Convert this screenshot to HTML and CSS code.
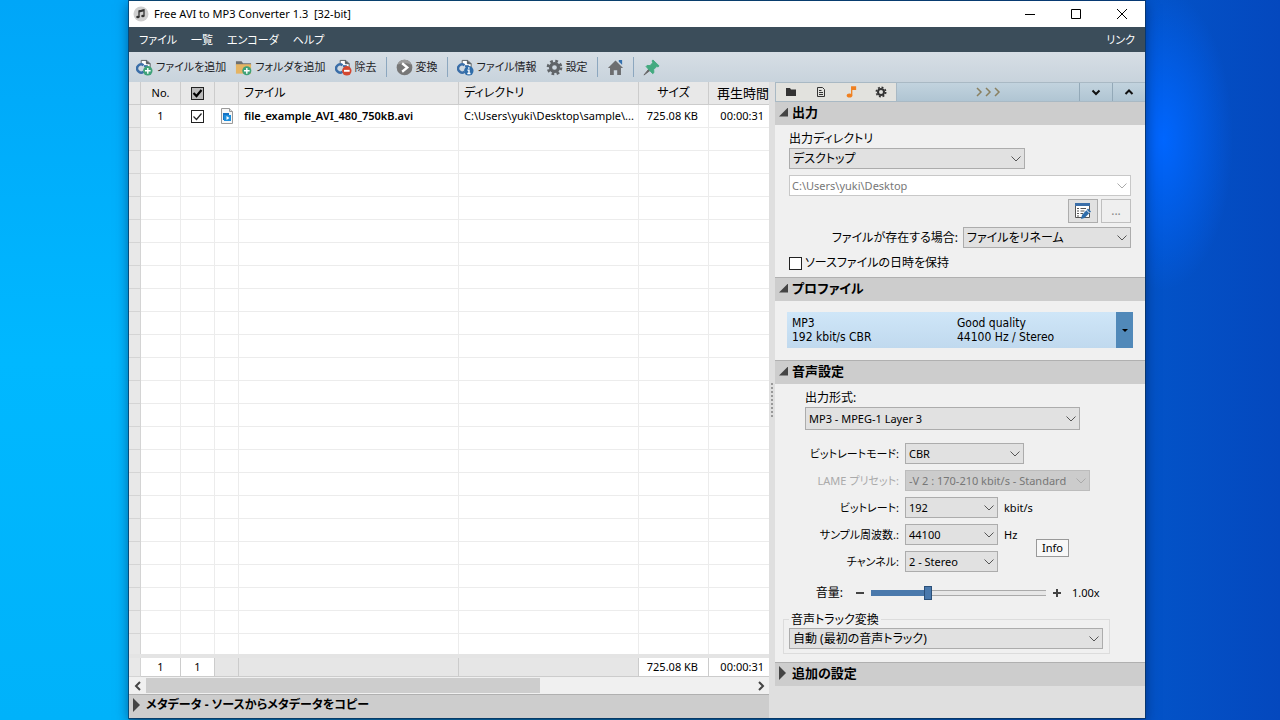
FILE: index.html
```html
<!DOCTYPE html>
<html lang="ja">
<head>
<meta charset="utf-8">
<title>Free AVI to MP3 Converter</title>
<link rel="stylesheet" href="styles.css">
</head>
<body>
<svg class="defs" aria-hidden="true">
  <symbol id="media" viewBox="0 0 18 18">
    <path d="M5.500 5V1.500h6L15 5v5" fill="#fff" stroke="#555b60"/>
    <path d="M11 1.500V5h4" fill="#555b60" stroke="#555b60"/>
    <path d="M8 6.500a4.300 4.300 0 1 0 0 7" fill="none" stroke="#3a6ea8" stroke-width="2.600"/>
    <path d="M8.500 7.500h4" stroke="#3a6ea8" stroke-width="2"/>
  </symbol>
</svg>
<div class="window">
  <header class="titlebar">
    <svg class="app-icon" viewBox="0 0 16 16"><circle cx="8" cy="8" r="7.500" fill="#cfcfcf"/><path d="M6 11V5l5-1.200v6" fill="none" stroke="#333" stroke-width="1.300"/><path d="M6 5.500l5-1.200" stroke="#333" stroke-width="1.800"/><ellipse cx="4.900" cy="11" rx="1.700" ry="1.300" fill="#333"/><ellipse cx="9.900" cy="10" rx="1.700" ry="1.300" fill="#333"/></svg>
    <h1 class="title">Free AVI to MP3 Converter 1.3&nbsp; [32-bit]</h1>
    <button class="win-btn" aria-label="最小化"><svg viewBox="0 0 12 12"><path d="M1 6.500h10" /></svg></button>
    <button class="win-btn" aria-label="最大化"><svg viewBox="0 0 12 12"><path d="M1.500 1.500h9v9h-9z"/></svg></button>
    <button class="win-btn" aria-label="閉じる"><svg viewBox="0 0 12 12"><path d="M1 1l10 10M11 1L1 11"/></svg></button>
  </header>
  <nav class="menubar">
    <button>ファイル</button><button>一覧</button><button>エンコーダ</button><button>ヘルプ</button>
    <button class="menu-end">リンク</button>
  </nav>
  <div class="toolbar">
    <button class="tool"><svg viewBox="0 0 18 18"><use href="#media"/><circle cx="12.500" cy="12.500" r="5" fill="#3fa278"/><path d="M12.500 9.500v6M9.500 12.500h6" stroke="#fff" stroke-width="1.500"/></svg>ファイルを追加</button>
    <button class="tool"><svg viewBox="0 0 18 18"><path d="M1 2.500h6l1.500 2H17V7H1z" fill="#6d6f70"/><path d="M1 5.500h16v10H1z" fill="#e5b463"/><circle cx="12.500" cy="12.500" r="4.800" fill="#3fa278"/><path d="M12.500 9.500v6M9.500 12.500h6" stroke="#fff" stroke-width="1.500"/></svg>フォルダを追加</button>
    <button class="tool"><svg viewBox="0 0 18 18"><use href="#media"/><circle cx="12.500" cy="12.500" r="5" fill="#d4472f"/><path d="M9.500 12.500h6" stroke="#fff" stroke-width="2"/></svg>除去</button>
    <span class="sep"></span>
    <button class="tool"><svg viewBox="0 0 18 18"><circle cx="9" cy="9" r="8.300" fill="#777"/><path d="M1.500 6a8 8 0 0 1 15 0c-5-2-10-2-15 0z" fill="#9b9b9b"/><path d="M6.500 4.500L12 9l-5.500 4.500" fill="none" stroke="#fff" stroke-width="2.400"/></svg>変換</button>
    <span class="sep"></span>
    <button class="tool"><svg viewBox="0 0 18 18"><use href="#media"/><circle cx="12.500" cy="12.500" r="5" fill="#2f6daa"/><path d="M12.500 8.700v1.700M11 11.800h1.700v3.400M10.900 15.300h3.400" fill="none" stroke="#fff" stroke-width="1.500"/></svg>ファイル情報</button>
    <button class="tool"><svg viewBox="0 0 18 18"><circle cx="9" cy="9" r="4.200" fill="none" stroke="#606468" stroke-width="3.400"/><circle cx="9" cy="9" r="6.800" fill="none" stroke="#606468" stroke-width="3" stroke-dasharray="2.800 2.540"/></svg>設定</button>
    <span class="sep"></span>
    <button class="tool" aria-label="ホーム"><svg viewBox="0 0 18 18"><path d="M12.500 1H16v5l-3.500-3z" fill="#3470ae"/><path d="M9 1.500L17 9.500h-2.200V17h-4v-5H7.200v5h-4V9.500H1z" fill="#6d6e70"/></svg></button>
    <span class="sep"></span>
    <button class="tool" aria-label="ピン留め"><svg viewBox="0 0 18 18"><path d="M6.500 10.200L1 17l7-5.300z" fill="#666" stroke="#666"/><path d="M10.500 1l6.500 6.300-1 1-1.500-.300-3.200 3.200.200 3.300-1.300 1L3.300 8l1-1.200 3.200.200L10.300 4l-.600-2z" fill="#43aa80" stroke="#43aa80"/></svg></button>
  </div>
  <div class="main">
    <section class="list-pane">
      <div class="grid-wrap">
        <table class="files">
          <colgroup><col class="c-gut"><col class="c-no"><col class="c-chk"><col class="c-ico"><col class="c-file"><col class="c-dir"><col class="c-size"><col class="c-time"></colgroup>
          <thead><tr><th></th><th class="mid">No.</th><th class="mid"><input type="checkbox" class="check head" checked aria-label="すべて選択"></th><th></th><th class="jp">ファイル</th><th class="jp">ディレクトリ</th><th class="mid jp">サイズ</th><th class="mid last">再生時間</th></tr></thead>
          <tbody>
            <tr><td></td><td class="mid">1</td><td class="mid"><input type="checkbox" class="check" checked aria-label="file_example_AVI_480_750kB.avi"></td><td class="mid"><svg class="file-ico" viewBox="0 0 14 16"><path d="M1.500.500h8l3 3v12h-11z" fill="#f7f7f7" stroke="#9a9a9a"/><path d="M9.500.500v3h3" fill="#ddd" stroke="#9a9a9a"/><path d="M3 5h6v2H5v5H3z" fill="#1673c4"/><path d="M4 7h7v6H4z" fill="#1f8fdc"/><path d="M6.500 8l3 2-3 2z" fill="#fff"/></svg></td><td class="name">file_example_AVI_480_750kB.avi</td><td>C:\Users\yuki\Desktop\sample\...</td><td class="num">725.08 KB</td><td class="num">00:00:31</td></tr>
            <tr><td></td><td></td><td></td><td></td><td></td><td></td><td></td><td></td></tr>
            <tr><td></td><td></td><td></td><td></td><td></td><td></td><td></td><td></td></tr>
            <tr><td></td><td></td><td></td><td></td><td></td><td></td><td></td><td></td></tr>
            <tr><td></td><td></td><td></td><td></td><td></td><td></td><td></td><td></td></tr>
            <tr><td></td><td></td><td></td><td></td><td></td><td></td><td></td><td></td></tr>
            <tr><td></td><td></td><td></td><td></td><td></td><td></td><td></td><td></td></tr>
            <tr><td></td><td></td><td></td><td></td><td></td><td></td><td></td><td></td></tr>
            <tr><td></td><td></td><td></td><td></td><td></td><td></td><td></td><td></td></tr>
            <tr><td></td><td></td><td></td><td></td><td></td><td></td><td></td><td></td></tr>
            <tr><td></td><td></td><td></td><td></td><td></td><td></td><td></td><td></td></tr>
            <tr><td></td><td></td><td></td><td></td><td></td><td></td><td></td><td></td></tr>
            <tr><td></td><td></td><td></td><td></td><td></td><td></td><td></td><td></td></tr>
            <tr><td></td><td></td><td></td><td></td><td></td><td></td><td></td><td></td></tr>
            <tr><td></td><td></td><td></td><td></td><td></td><td></td><td></td><td></td></tr>
            <tr><td></td><td></td><td></td><td></td><td></td><td></td><td></td><td></td></tr>
            <tr><td></td><td></td><td></td><td></td><td></td><td></td><td></td><td></td></tr>
            <tr><td></td><td></td><td></td><td></td><td></td><td></td><td></td><td></td></tr>
            <tr><td></td><td></td><td></td><td></td><td></td><td></td><td></td><td></td></tr>
            <tr><td></td><td></td><td></td><td></td><td></td><td></td><td></td><td></td></tr>
            <tr><td></td><td></td><td></td><td></td><td></td><td></td><td></td><td></td></tr>
            <tr><td></td><td></td><td></td><td></td><td></td><td></td><td></td><td></td></tr>
            <tr><td></td><td></td><td></td><td></td><td></td><td></td><td></td><td></td></tr>
            <tr><td></td><td></td><td></td><td></td><td></td><td></td><td></td><td></td></tr>
          </tbody>
        </table>
      </div>
      <table class="files totals">
        <colgroup><col class="c-gut"><col class="c-no"><col class="c-chk"><col class="c-ico"><col class="c-file"><col class="c-dir"><col class="c-size"><col class="c-time"></colgroup>
        <tbody><tr><td></td><td class="mid sum">1</td><td class="mid sum">1</td><td></td><td></td><td></td><td class="num sum">725.08 KB</td><td class="num sum">00:00:31</td></tr></tbody>
      </table>
      <div class="hscroll">
        <button aria-label="左へスクロール"><svg viewBox="0 0 8 10"><path d="M6 1L2 5l4 4"/></svg></button>
        <div class="rail"><div class="thumb"></div></div>
        <button aria-label="右へスクロール"><svg viewBox="0 0 8 10"><path d="M2 1l4 4-4 4"/></svg></button>
      </div>
      <button class="section closed meta">メタデータ - ソースからメタデータをコピー</button>
    </section>
    <div class="splitter"><span class="grip"></span></div>
    <aside class="settings">
      <div class="tabs">
        <div class="tab-icons">
          <button aria-label="出力"><svg viewBox="0 0 12 12"><path d="M1 2h4l1 1.500h5V10H1z" fill="#333"/></svg></button>
          <button aria-label="プロファイル"><svg viewBox="0 0 12 12"><path d="M2.500 1.500h5l2 2v7h-7zM4 4.500h2.500M4 6.500h4M4 8.500h4" fill="none" stroke="#333"/></svg></button>
          <button aria-label="音声設定"><svg viewBox="0 0 12 12"><path d="M6.700 9.500V.800h3.800v2.500H7" fill="none" stroke="#f08020" stroke-width="1.300"/><path d="M6.500 1h4v2.200h-4z" fill="#f08020"/><ellipse cx="4.500" cy="9.500" rx="2.800" ry="2.100" fill="#f08020"/></svg></button>
          <button aria-label="追加の設定"><svg viewBox="0 0 12 12"><circle cx="6" cy="6" r="3" fill="none" stroke="#333" stroke-width="2"/><circle cx="6" cy="6" r="4.700" fill="none" stroke="#333" stroke-width="1.600" stroke-dasharray="1.900 1.790"/></svg></button>
        </div>
        <button class="more" aria-label="次へ"><svg viewBox="0 0 26 10"><path d="M2 1l4 4-4 4M11 1l4 4-4 4M20 1l4 4-4 4"/></svg></button>
        <button class="nav" aria-label="下へ"><svg viewBox="0 0 10 10"><path d="M1.500 3.500L5 7l3.500-3.500"/></svg></button>
        <button class="nav" aria-label="上へ"><svg viewBox="0 0 10 10"><path d="M1.500 7L5 3.500 8.500 7"/></svg></button>
      </div>
      <button class="section open first">出力</button>
      <div class="output">
        <label class="line" for="outdir">出力ディレクトリ</label>
        <select class="combo w-outdir" id="outdir"><option>デスクトップ</option></select>
        <select class="combo path" aria-label="出力先パス" disabled><option>C:\Users\yuki\Desktop</option></select>
        <div class="browse">
          <button class="edit" aria-label="編集"><svg viewBox="0 0 18 18"><path d="M1.500 1.500h14v14h-14z" fill="#fff" stroke="#555"/><path d="M1 1h15v3H1z" fill="#3a6ea8"/><path d="M3 6.500h2M3 9h2M3 11.500h2M3 14h2M6.500 6.500H12M6.500 9h4M6.500 11.500h2.500" stroke="#555"/><path d="M7 17l1-4 6-6.500 3 3L10.500 16z" fill="#2f6daa"/><path d="M12.500 8l3 3" stroke="#fff"/></svg></button>
          <button class="dots" disabled>...</button>
        </div>
        <div class="exists"><label for="exists">ファイルが存在する場合:</label><select class="combo" id="exists"><option>ファイルをリネーム</option></select></div>
        <label class="keep"><input type="checkbox" class="check">ソースファイルの日時を保持</label>
      </div>
      <button class="section open">プロファイル</button>
      <div class="profile">
        <button class="card"><span class="p-left">MP3<br>192 kbit/s CBR</span><span class="p-right">Good quality<br>44100 Hz / Stereo</span><span class="p-drop"></span></button>
      </div>
      <button class="section open">音声設定</button>
      <div class="audio">
        <label class="line inset" for="format">出力形式:</label>
        <select class="combo tall inset" id="format"><option>MP3 - MPEG-1 Layer 3</option></select>
        <div class="fields">
          <label for="mode">ビットレートモード:</label><select class="combo w-mode" id="mode"><option>CBR</option></select>
          <label class="off" for="lame">LAME プリセット:</label><select class="combo w-lame" id="lame" disabled><option>-V 2 : 170-210 kbit/s - Standard</option></select>
          <label for="rate">ビットレート:</label><select class="combo" id="rate"><option>192</option></select><span class="unit">kbit/s</span>
          <label for="freq">サンプル周波数.:</label><select class="combo" id="freq"><option>44100</option></select><span class="unit">Hz</span>
          <label for="chan">チャンネル:</label><select class="combo" id="chan"><option>2 - Stereo</option></select>
          <button class="info">Info</button>
        </div>
        <div class="volume">
          <label for="vol">音量:</label>
          <button aria-label="下げる"><svg viewBox="0 0 10 10"><path d="M1 5h8"/></svg></button>
          <input type="range" id="vol" min="0" max="100" value="32">
          <button aria-label="上げる"><svg viewBox="0 0 10 10"><path d="M1 5h8M5 1v8"/></svg></button>
          <output class="level">1.00x</output>
        </div>
        <fieldset class="track"><legend>音声トラック変換</legend><select class="combo" aria-label="音声トラック変換"><option>自動 (最初の音声トラック)</option></select></fieldset>
      </div>
      <button class="section closed">追加の設定</button>
    </aside>
  </div>
</div>
</body>
</html>
```
FILE: styles.css
```css
* { box-sizing: border-box; }

body {
  margin: 0;
  min-height: 100vh;
  display: flex;
  padding: 1px 135px 2px 129px;
  font: 11px/16px "Noto Sans", "Noto Sans CJK JP", sans-serif;
  font-feature-settings: "palt";
  color: #000;
  background:
    linear-gradient(180deg, #00a6f8 0, #00b8ff 360px, #00b2fa 100%) left / 129px 100% no-repeat,
    radial-gradient(70px 150px at calc(100% - 117px) 140px, #0066ff, rgba(0, 102, 255, 0)) no-repeat,
    linear-gradient(90deg, #0a86c4 0, #0a6ea8 50%, #0353c8 90%, #0448be 100%);
}

button, select, input { font: inherit; font-feature-settings: inherit; color: inherit; margin: 0; }
button { border: 0; padding: 0; background: none; }
svg { display: block; flex: none; }
.defs { display: none; }

.window {
  flex: 1;
  min-width: 0;
  display: flex;
  flex-direction: column;
  background: #dfdfdf;
  box-shadow: 0 0 0 1px rgba(10, 50, 90, .7), 0 3px 12px rgba(0, 20, 60, .55);
}

/* Title bar */
.titlebar { display: flex; height: 26px; background: #fff; align-items: center; }
.app-icon { width: 16px; height: 16px; margin: 0 5px 0 4px; }
.title { flex: 1; margin: 0; font-size: 11px; font-weight: 400; }
.win-btn { width: 46px; height: 26px; display: grid; place-items: center; }
.win-btn svg { width: 12px; height: 12px; fill: none; stroke: #000; }

/* Menu bar */
.menubar { display: flex; gap: 14px; height: 25px; padding: 0 10px; background: #3b4d5a; color: #fff; }
.menu-end { margin-left: auto; }

/* Toolbar */
.toolbar { display: flex; align-items: center; gap: 9px; height: 30px; padding: 0 7px; background: linear-gradient(#d7dee5, #c8d3dc); color: #1d2226; }
.tool { display: flex; align-items: center; gap: 3px; height: 24px; white-space: nowrap; }
.tool svg { width: 17px; height: 17px; }
.sep { width: 1px; height: 20px; background: #8ca7bf; }

.main { flex: 1; display: flex; min-height: 0; }

/* File list */
.list-pane { flex: 1; min-width: 0; display: flex; flex-direction: column; }
.grid-wrap { flex: 1 1 0; min-height: 0; overflow: hidden; background: #fff; }
.files { width: 100%; table-layout: fixed; border-collapse: separate; border-spacing: 0; }
.c-gut { width: 12px; }
.c-no { width: 40px; }
.c-chk { width: 34px; }
.c-ico { width: 24px; }
.c-dir { width: 180px; }
.c-size { width: 70px; }
.c-time { width: 60px; }
.files th, .files td { padding: 0 5px; text-align: left; font-weight: 400; white-space: nowrap; overflow: hidden; border-right: 1px solid #ececec; border-bottom: 1px solid #ececec; }
.files th { height: 23px; background: #e8e8e8; border-color: #ccc; }
.files td { height: 23px; }
.files td:first-child { background: #e8e8e8; border-color: #d4d4d4; }
.files th:last-child, .files td:last-child { border-right: 0; }
.files .mid { text-align: center; padding: 0; }
.files .num { text-align: right; }
.files td.num:nth-child(7) { padding-right: 10px; }
.files .jp { font-size: 12px; }
.files .last { font-size: 13px; text-align: right; }
.files .name { font-weight: 600; }
.file-ico { width: 14px; height: 16px; margin: auto; }
.totals { border-top: 4px solid #e4e4e4; background: #e6e6e6; }
.totals td { height: 19px; border-color: #ccc; }
.totals .sum { background: #fff; }

.check { appearance: none; width: 13px; height: 13px; border: 1px solid #222; background: #fff; display: block; }
.mid .check { margin: 0 auto; }
.check:checked { background: url("data:image/svg+xml,%3Csvg xmlns='http://www.w3.org/2000/svg' viewBox='0 0 11 11'%3E%3Cpath d='M1.500 5.500l3 3 5-6' fill='none' stroke='%23222' stroke-width='1.200'/%3E%3C/svg%3E") #fff; }
.check.head:checked { background: url("data:image/svg+xml,%3Csvg xmlns='http://www.w3.org/2000/svg' viewBox='0 0 11 11'%3E%3Cpath d='M1.500 5l3 3 5-6' fill='none' stroke='%23000' stroke-width='2.200'/%3E%3C/svg%3E") #bbb; }

.hscroll { display: flex; height: 17px; background: #f0f0f0; }
.hscroll button { width: 17px; display: grid; place-items: center; }
.hscroll svg { width: 8px; height: 10px; fill: none; stroke: #444; stroke-width: 2; }
.rail { flex: 1; }
.thumb { width: 65%; height: 15px; margin-top: 1px; background: #cdcdcd; }

.splitter { width: 6px; display: flex; align-items: center; justify-content: center; }
.grip { width: 2px; height: 34px; background: repeating-linear-gradient(#999 0 2px, transparent 2px 4px); }

/* Section headers */
.section { display: flex; align-items: center; width: 100%; height: 24px; flex: none; padding: 0 0 3px 4px; gap: 4px; border-top: 1px solid #b0b0b0; background: #cdcdcd; font-size: 13px; font-weight: 700; text-align: left; }
.section.first { height: 23px; border-top: 0; }
.section.meta { font-size: 12px; }
.section::before { content: ""; width: 9px; height: 9px; background: #444; clip-path: polygon(100% 0, 100% 100%, 0 100%); }
.section.closed::before { height: 14px; width: 7px; clip-path: polygon(0 0, 100% 50%, 0 100%); margin-right: 2px; }

/* Settings */
.settings { width: 370px; flex: none; }
.tabs { display: flex; height: 20px; border: 1px solid #a9b9c4; border-width: 1px 0 1px 1px; background: linear-gradient(#c2d3de, #b0c5d3); }
.tab-icons { display: flex; width: 121px; background: #e2e2de; border-right: 1px solid #a9b9c4; }
.tab-icons button { flex: 1; display: grid; place-items: center; }
.tab-icons svg { width: 12px; height: 12px; }
.more { flex: 1; display: grid; place-items: center; }
.more svg { width: 26px; height: 10px; fill: none; stroke: #8a8060; stroke-width: 1.500; }
.nav { width: 33px; display: grid; place-items: center; border-left: 1px solid #93a9b8; }
.nav svg { width: 10px; height: 10px; fill: none; stroke: #111; stroke-width: 2; }

.output, .profile, .audio { display: flex; flex-direction: column; background: #f0f0f0; }
.output { padding: 5px 14px; font-size: 12px; }
.line { line-height: 18px; }

.combo {
  appearance: none;
  height: 21px;
  width: 100%;
  min-width: 0;
  padding: 0 20px 0 3px;
  border: 1px solid #acacac;
  border-radius: 0;
  background: url("data:image/svg+xml,%3Csvg xmlns='http://www.w3.org/2000/svg' width='10' height='6'%3E%3Cpath d='M.500.500L5 5 9.500.500' fill='none' stroke='%23555'/%3E%3C/svg%3E") right 3px center no-repeat #e1e1e1;
}
.combo:disabled { opacity: 1; color: #777; background-color: #ccc; border-color: #bcbcbc; background-image: url("data:image/svg+xml,%3Csvg xmlns='http://www.w3.org/2000/svg' width='10' height='6'%3E%3Cpath d='M.500.500L5 5 9.500.500' fill='none' stroke='%23aaa'/%3E%3C/svg%3E"); }
.w-outdir { width: 236px; }
.combo.path { margin-top: 6px; padding-left: 2px; background-color: #fff; border-color: #c8c8c8; font-size: 11px; }
.browse { display: flex; justify-content: flex-end; gap: 3px; margin: 3px 0 4px; }
.browse button { width: 30px; height: 24px; display: grid; place-items: center; border: 1px solid #adadad; background: #e1e1e1; }
.browse .dots { background: #efefef; border-color: #bfbfbf; color: #888; }
.browse svg { width: 18px; height: 18px; }
.exists { display: flex; align-items: center; justify-content: flex-end; gap: 5px; }
.exists .combo { width: 168px; }
.keep { display: flex; align-items: center; gap: 3px; height: 18px; margin-top: 6px; }

.profile { padding: 11px 12px 12px; }
.card { display: flex; height: 36px; padding-left: 5px; background: linear-gradient(#cfe6f8, #c0d9ee); font: 12px/14px "DejaVu Sans Condensed", "DejaVu Sans", sans-serif; text-align: left; align-items: center; }
.p-left { width: 165px; }
.p-right { flex: 1; }
.p-drop { width: 17px; height: 36px; display: grid; place-items: center; background: #5189b9; }
.p-drop::before { content: ""; border: 3px solid transparent; border-top-color: #000; border-bottom: 0; }

.audio { padding: 5px 35px 8px 8px; }
.audio .line, .volume label, .audio legend, .track .combo { font-size: 12px; }
.inset { margin-left: 22px; }
.combo.tall { width: 275px; height: 23px; }
.fields { display: grid; grid-template-columns: 116px 93px 26px 33px; column-gap: 6px; row-gap: 6px; grid-auto-rows: 21px; margin-top: 13px; align-items: center; }
.fields label { grid-column: 1; text-align: right; white-space: nowrap; }
.off { color: #aaa; }
.w-mode { grid-column: 2 / -1; width: 119px; }
.w-lame { grid-column: 2 / -1; width: 185px; }
.unit { white-space: nowrap; }
.info { grid-column: 4; grid-row: 4 / 6; height: 18px; line-height: 16px; border: 1px solid #999; background: #f8f8f8; }
.volume { display: flex; align-items: center; height: 18px; margin: 12px 0 9px; }
.volume label { width: 60px; text-align: right; margin-right: 12px; }
.volume button { width: 10px; height: 10px; }
.volume svg { width: 10px; height: 10px; stroke: #444; stroke-width: 2; }
.volume input { appearance: none; width: 175px; height: 14px; margin: 0 6px; background: none; }
.volume input::-webkit-slider-runnable-track { height: 14px; background: linear-gradient(90deg, #4a79ac 33%, transparent 33%) center / 100% 6px no-repeat, linear-gradient(#aaa 1px, #e7e7e7 1px 5px, #aaa 5px) center / 100% 6px no-repeat; }
.volume input::-webkit-slider-thumb { appearance: none; width: 8px; height: 14px; background: #4a79ac; border: 1px solid #2b5079; }
.level { margin-left: 10px; }
.track { margin: 0; padding: 0 6px 4px 5px; border: 1px solid #dcdcdc; min-width: 0; }
.track legend { padding: 0 2px; line-height: 17px; }
.track .combo { display: block; }
```
